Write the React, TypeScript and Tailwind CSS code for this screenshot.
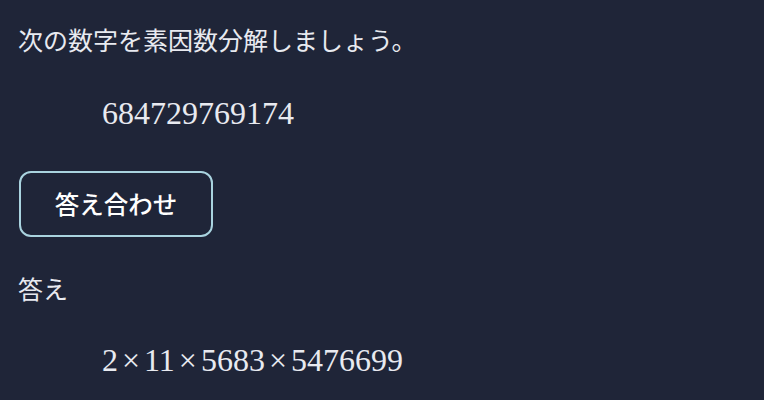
export default function App() {
  return (
    <div className="h-[400px] w-full overflow-hidden bg-[#1f2538] px-[18px] text-[#e8eaf0] [font-family:'Noto_Sans_CJK_JP','Noto_Sans',sans-serif]">
      <p className="pt-[21px] text-[25px] leading-[36px]">次の数字を素因数分解しましょう。</p>

      {/* 問題 */}
      <div className="mt-[36px] pl-[84px] text-[32px] leading-[40px] [font-family:'Liberation_Serif',serif]">
        684729769174
      </div>

      <button className="mt-[38px] ml-px flex h-[66px] w-[194px] items-center justify-center rounded-[12px] border-2 border-[#a9d3df] text-[24.5px] font-medium text-white">
        答え合わせ
      </button>

      <p className="mt-[33px] text-[25px] leading-[36px]">答え</p>

      {/* 答え */}
      <div className="mt-[34px] flex items-baseline pl-[84px] text-[32px] leading-[40px] [font-family:'Liberation_Serif',serif]">
        <span>2</span>
        <span className="mx-[4px]">×</span>
        <span>11</span>
        <span className="mx-[4px]">×</span>
        <span>5683</span>
        <span className="mx-[4px]">×</span>
        <span>5476699</span>
      </div>
    </div>
  );
}
